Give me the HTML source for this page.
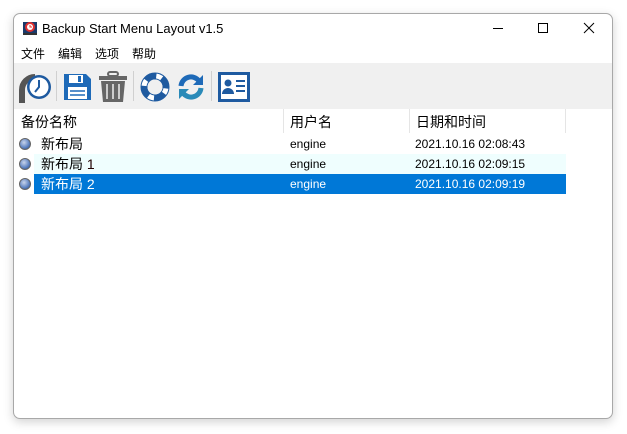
<!DOCTYPE html>
<html><head><meta charset="utf-8"><style>
*{margin:0;padding:0;box-sizing:border-box}
body{width:627px;height:434px;background:#fff;position:relative;overflow:hidden;font-family:"Liberation Sans","Noto Sans CJK SC",sans-serif}
.win{position:absolute;left:13px;top:13px;width:600px;height:406px;border:1px solid #a8a8a8;border-radius:7px;background:#fff;box-shadow:0 3px 10px rgba(0,0,0,.18);overflow:hidden}
.abs{position:absolute}
.title{left:28px;top:7px;font-size:13px;color:#000}
.menu{top:31px;left:7px;font-size:12px}
.menu span{margin-right:13px}
.tb{left:0;top:49px;width:600px;height:46px;background:#f0f0f0}
.sep{position:absolute;top:8px;width:1px;height:30px;background:#d0d0d0}
.hdr{top:95px;left:0;height:24px;width:600px;font-size:14px}
.row{position:absolute;height:20px;font-size:12px;line-height:20px}
.ball{position:absolute;left:5px;width:12px;height:12px;border-radius:50%;background:radial-gradient(circle at 40% 35%,#c8d4ec,#5a80c0 60%,#2a4a88);border:1px solid #666}
</style></head><body>
<div class="win">
<svg class="abs" style="left:8px;top:6px" width="16" height="16" viewBox="0 0 16 16"><rect x="1" y="2" width="14" height="11" fill="#1a3a6a"/><rect x="1" y="13" width="14" height="2" fill="#333"/><circle cx="8" cy="7" r="5" fill="#e03030"/><circle cx="8" cy="7" r="3" fill="#fff"/><path d="M8 5v2h2" stroke="#e03030" fill="none"/></svg>
<div class="abs title">Backup Start Menu Layout v1.5</div>
<svg class="abs" style="left:478px;top:8px" width="12" height="12"><path d="M1 6.5h10" stroke="#000"/></svg>
<svg class="abs" style="left:523px;top:8px" width="12" height="12"><rect x="1.5" y="1.5" width="9" height="9" fill="none" stroke="#000"/></svg>
<svg class="abs" style="left:569px;top:8px" width="12" height="12"><path d="M1 1l10 10M11 1L1 11" stroke="#000"/></svg>
<div class="abs menu"><span>文件</span><span>编辑</span><span>选项</span><span>帮助</span></div>
<div class="abs tb">
<svg class="abs" style="left:4px;top:7px" width="34" height="34" viewBox="0 0 34 34"><path d="M4 33V20a13 13 0 0 1 13-13" stroke="#555" stroke-width="6" fill="none"/><circle cx="21" cy="17" r="12" fill="#1e5aa0"/><circle cx="21" cy="17" r="9.5" fill="#fff"/><path d="M21 10v7l-4 5" stroke="#1e5aa0" stroke-width="2" fill="none"/></svg>
<div class="sep" style="left:42px"></div>
<svg class="abs" style="left:48px;top:9px" width="30" height="30" viewBox="0 0 30 30"><path d="M2 2h22l5 5v21H2z" fill="#1e6ab8"/><rect x="7" y="3" width="14" height="8" fill="#fff"/><rect x="16" y="4" width="3" height="6" fill="#1e6ab8"/><rect x="6" y="15" width="19" height="12" fill="#fff"/><path d="M8 19h15M8 23h15" stroke="#1e6ab8" stroke-width="1.5"/></svg>
<svg class="abs" style="left:84px;top:8px" width="30" height="32" viewBox="0 0 30 32"><rect x="10" y="1" width="10" height="4" rx="2" fill="none" stroke="#666" stroke-width="2"/><rect x="1" y="5" width="28" height="4" fill="#666"/><path d="M3 10h24l-2 21H5z" fill="#666"/><path d="M9 13v15M15 13v15M21 13v15" stroke="#ccc" stroke-width="2"/></svg>
<div class="sep" style="left:119px"></div>
<svg class="abs" style="left:126px;top:9px" width="30" height="30" viewBox="0 0 30 30"><circle cx="15" cy="15" r="11" fill="none" stroke="#1e5aa0" stroke-width="7"/><g stroke="#fff" stroke-width="5" stroke-dasharray="6 11.3" fill="none" transform="rotate(20 15 15)"><circle cx="15" cy="15" r="11" stroke-dashoffset="3"/></g><circle cx="15" cy="15" r="7.5" fill="#f0f0f0"/></svg>
<svg class="abs" style="left:162px;top:9px" width="30" height="30" viewBox="0 0 30 30"><path d="M5 14a10 10 0 0 1 18-5" stroke="#1e6ab8" stroke-width="5" fill="none"/><path d="M27 3v10h-10z" fill="#1e6ab8"/><path d="M25 16a10 10 0 0 1-18 5" stroke="#2a8ab8" stroke-width="5" fill="none"/><path d="M3 27v-10h10z" fill="#2a8ab8"/></svg>
<div class="sep" style="left:197px"></div>
<svg class="abs" style="left:204px;top:9px" width="32" height="30" viewBox="0 0 32 30"><rect x="1.5" y="1.5" width="29" height="27" fill="#fff" stroke="#1e5aa0" stroke-width="3"/><circle cx="10" cy="11" r="3.5" fill="#1e5aa0"/><path d="M4 22a6 6 0 0 1 12 0z" fill="#1e5aa0"/><path d="M18 9h9M18 14h9M18 19h9" stroke="#1e5aa0" stroke-width="2"/></svg>
</div>
<div class="abs hdr">
<div class="abs" style="left:7px;top:3px">备份名称</div>
<div class="abs" style="left:269px;top:0;width:1px;height:24px;background:#e5e5e5"></div>
<div class="abs" style="left:276px;top:3px">用户名</div>
<div class="abs" style="left:395px;top:0;width:1px;height:24px;background:#e5e5e5"></div>
<div class="abs" style="left:402px;top:3px">日期和时间</div>
<div class="abs" style="left:551px;top:0;width:1px;height:24px;background:#e5e5e5"></div>
</div>
<div class="row" style="top:120px;left:0;width:600px"><div class="ball" style="top:4px"></div><span class="abs" style="left:27px;font-size:14px">新布局</span><span class="abs" style="left:276px">engine</span><span class="abs" style="left:401px">2021.10.16 02:08:43</span></div>
<div class="row" style="top:140px;left:0;width:600px"><div class="abs" style="left:20px;width:532px;height:20px;background:#effefe"></div><div class="ball" style="top:4px"></div><span class="abs" style="left:27px;font-size:14px">新布局 <span style="color:#200">1</span></span><span class="abs" style="left:276px">engine</span><span class="abs" style="left:401px">2021.10.16 02:09:15</span></div>
<div class="row" style="top:160px;left:0;width:600px;color:#fff"><div class="abs" style="left:20px;width:532px;height:20px;background:#0078d7"></div><div class="ball" style="top:4px"></div><span class="abs" style="left:27px;font-size:14px">新布局 2</span><span class="abs" style="left:276px">engine</span><span class="abs" style="left:401px">2021.10.16 02:09:19</span></div>
</div>
</body></html>
